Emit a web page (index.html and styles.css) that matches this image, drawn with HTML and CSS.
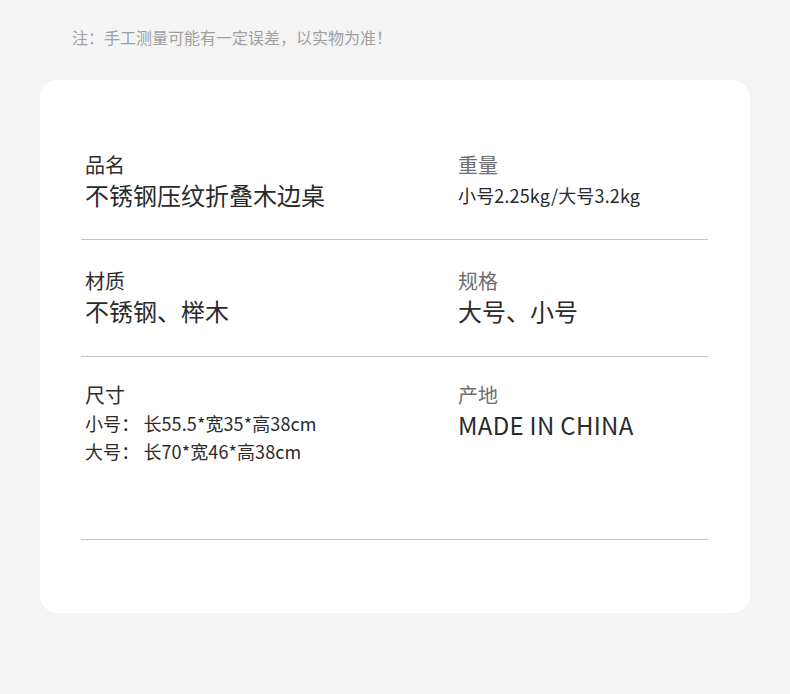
FILE: index.html
```html
<!DOCTYPE html>
<html lang="zh-CN">
<head>
<meta charset="utf-8">
<title>产品参数</title>
<link rel="stylesheet" href="styles.css">
</head>
<body>
<div class="page">
  <p class="note">注：手工测量可能有一定误差，以实物为准！</p>
  <div class="card">
    <div class="row row-first">
      <div class="cell">
        <div class="label">品名</div>
        <div class="value">不锈钢压纹折叠木边桌</div>
      </div>
      <div class="cell">
        <div class="label label-light">重量</div>
        <div class="value value-small">小号2.25kg/大号3.2kg</div>
      </div>
    </div>
    <div class="row row-second">
      <div class="cell">
        <div class="label">材质</div>
        <div class="value">不锈钢、榉木</div>
      </div>
      <div class="cell">
        <div class="label label-light">规格</div>
        <div class="value">大号、小号</div>
      </div>
    </div>
    <div class="row row-tall">
      <div class="cell">
        <div class="label">尺寸</div>
        <div class="size-line">小号：&nbsp;长55.5*宽35*高38cm</div>
        <div class="size-line">大号：&nbsp;长70*宽46*高38cm</div>
      </div>
      <div class="cell">
        <div class="label label-light">产地</div>
        <div class="value value-latin">MADE IN CHINA</div>
      </div>
    </div>
  </div>
</div>
</body>
</html>
```
FILE: styles.css
```css
html, body {
  margin: 0;
  padding: 0;
  background: #f4f4f4;
}
body {
  font-family: "Noto Sans CJK SC", "Noto Sans", sans-serif;
  color: #333;
  width: 790px;
  height: 694px;
  overflow: hidden;
}
.page {
  padding-top: 26px;
}
.note {
  margin: 0 0 32px 72px;
  font-size: 16px;
  line-height: 22px;
  color: #a0a0a0;
}
.card {
  margin: 0 40px;
  width: 710px;
  height: 533px;
  box-sizing: border-box;
  background: #fff;
  border-radius: 18px;
  padding: 0 42px 0 41px;
}
.row {
  display: grid;
  grid-template-columns: 373px 1fr;
  padding: 27px 0 28px;
  border-bottom: 1px solid #c4c4c4;
}
.row-first {
  padding-top: 71px;
}
.row-second {
  padding-bottom: 29px;
}
.row-tall {
  height: 183px;
  box-sizing: border-box;
  padding-top: 24px;
}
.cell {
  padding-left: 4px;
}
.label {
  font-size: 20px;
  line-height: 28px;
  color: #2e2e2e;
}
.label-light {
  color: #6e6e6e;
}
.value {
  font-size: 24px;
  line-height: 32px;
  color: #2a2a2a;
}
.value-latin {
  letter-spacing: 0.3px;
}
.value-small {
  font-size: 18px;
  letter-spacing: 0.15px;
}
.size-line {
  font-size: 18px;
  line-height: 28px;
  color: #2a2a2a;
  letter-spacing: 0.1px;
}
```
